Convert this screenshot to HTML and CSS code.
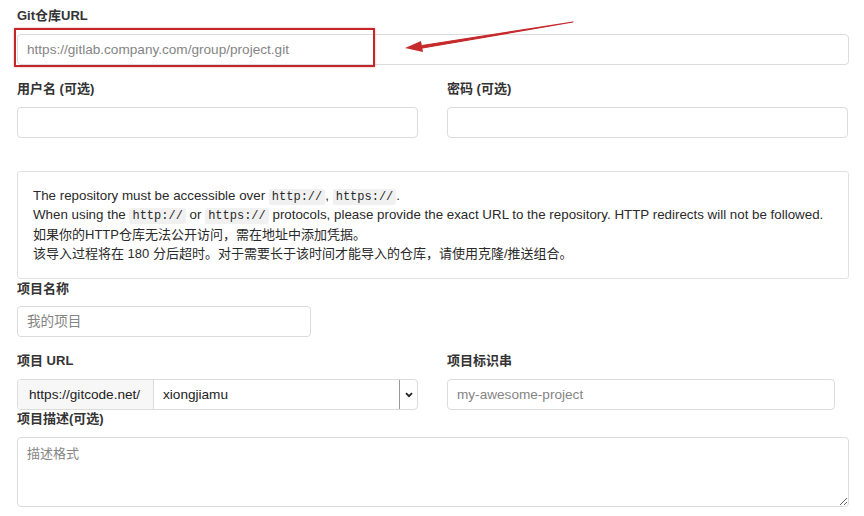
FILE: index.html
```html
<!DOCTYPE html>
<html lang="zh">
<head>
<meta charset="utf-8">
<link rel="stylesheet" href="styles.css">
</head>
<body>
<div class="form">
  <div class="group git-group">
    <label class="label">Git仓库URL</label>
    <input class="input" type="text" placeholder="https://gitlab.company.com/group/project.git">
    <div class="annot-box"></div>
    <svg class="annot-arrow" width="200" height="50" viewBox="0 0 200 50">
      <path d="M173 3 L22 26.5 L22.5 29 Z" stroke="#c62a2c" stroke-width="1.2" fill="#c62a2c" stroke-linejoin="round"/>
      <path d="M5 29 L21 22 L23 33 Z" fill="#c62a2c"/>
    </svg>
  </div>

  <div class="row">
    <div class="group col">
      <label class="label">用户名 (可选)</label>
      <input class="input" type="text">
    </div>
    <div class="group col">
      <label class="label">密码 (可选)</label>
      <input class="input" type="password">
    </div>
  </div>

  <div class="info">
    <p class="en">The repository must be accessible over <code>http://</code>, <code>https://</code>.</p>
    <p class="en">When using the <code>http://</code> or <code>https://</code> protocols, please provide the exact URL to the repository. HTTP redirects will not be followed.</p>
    <p>如果你的HTTP仓库无法公开访问，需在地址中添加凭据。</p>
    <p>该导入过程将在 180 分后超时。对于需要长于该时间才能导入的仓库，请使用克隆/推送组合。</p>
  </div>

  <div class="group name-group">
    <label class="label">项目名称</label>
    <input class="input name-input" type="text" placeholder="我的项目">
  </div>

  <div class="row url-row">
    <div class="group col">
      <label class="label">项目 URL</label>
      <div class="input-group">
        <span class="prefix">https://gitcode.net/</span>
        <span class="ns">xiongjiamu</span>
        <span class="caret">
          <svg width="8" height="6" viewBox="0 0 8 6"><path d="M1 1.2 L4 4.2 L7 1.2" stroke="#222" stroke-width="1.8" fill="none"/></svg>
        </span>
      </div>
    </div>
    <div class="group col">
      <label class="label">项目标识串</label>
      <input class="input slug-input" type="text" placeholder="my-awesome-project">
    </div>
  </div>

  <div class="group desc-group">
    <label class="label">项目描述(可选)</label>
    <textarea class="textarea" placeholder="描述格式"></textarea>
  </div>
</div>
</body>
</html>
```

FILE: styles.css
```css
* { box-sizing: border-box; }
html, body { margin: 0; padding: 0; background: #fff; }
body {
  font-family: "Liberation Sans", "Noto Sans CJK SC", sans-serif;
  font-size: 13px;
  color: #333;
  padding-top: 7px;
}
.form {
  width: 849px;
  padding-left: 17px;
}
.group { position: relative; }
.label {
  display: block;
  font-weight: bold;
  line-height: 18px;
  height: 18px;
  margin-bottom: 9px;
  color: #333;
}
.input {
  display: block;
  width: 100%;
  height: 31px;
  border: 1px solid #dcdcdc;
  border-radius: 4px;
  padding: 0 9px;
  font-family: inherit;
  font-size: 13.6px;
  color: #333;
  background: #fff;
  outline: none;
}
.input::placeholder, .textarea::placeholder { color: #858585; }
.git-group { margin-bottom: 15px; }
.annot-box {
  position: absolute;
  left: -3px;
  top: 21px;
  width: 361px;
  height: 39px;
  border: 2px solid #c3272c;
  box-shadow: 0 0 2px rgba(195, 39, 44, 0.4);
}
.annot-arrow {
  position: absolute;
  left: 383px;
  top: 12px;
}
.row {
  display: flex;
  gap: 29px;
}
.col { width: 401px; }
.info {
  margin-top: 33px;
  height: 108px;
  border: 1px solid #e2e2e2;
  border-radius: 3px;
  padding: 14px 15px 0 15px;
  line-height: 19.3px;
  color: #2a2a2a;
}
.info p {
  margin: 0;
  height: 19.3px;
  white-space: nowrap;
}
.info p.en { font-size: 13.35px; }
code {
  font-family: "Liberation Mono", "DejaVu Sans Mono", monospace;
  font-size: 12px;
  line-height: 1;
  background: #f1f1f1;
  padding: 1px 3px;
  border-radius: 2px;
}
.name-group { margin-top: 1px; }
.name-group .label { margin-bottom: 8px; }
.name-input { width: 294px; }
.url-row { margin-top: 15px; }
.input-group {
  display: flex;
  height: 31px;
  border: 1px solid #dcdcdc;
  border-radius: 4px;
  overflow: hidden;
  font-size: 13.6px;
}
.prefix {
  display: flex;
  align-items: center;
  width: 136px;
  padding-left: 11px;
  background: #f7f7f7;
  border-right: 1px solid #dcdcdc;
  color: #222;
}
.ns {
  display: flex;
  align-items: center;
  flex: 1;
  padding-left: 9px;
  color: #222;
}
.caret {
  display: flex;
  align-items: center;
  justify-content: center;
  width: 18px;
  border-left: 1px solid #9a9a9a;
}
.slug-input { width: 388px; }
.desc-group .label { margin-bottom: 9px; }
.textarea {
  display: block;
  width: 832px;
  height: 70px;
  border: 1px solid #dcdcdc;
  border-radius: 4px;
  padding: 5px 9px;
  font-family: inherit;
  font-size: 13px;
  color: #333;
  outline: none;
}
```
